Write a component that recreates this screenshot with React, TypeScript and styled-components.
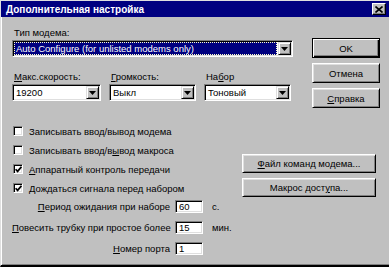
import styled, { createGlobalStyle } from "styled-components";

const GlobalStyle = createGlobalStyle`
  html, body {
    margin: 0;
    padding: 0;
    background: #c0c0c0;
  }
  body {
    font-family: "Liberation Sans", Arial, sans-serif;
    font-size: 9.5px;
    color: #000;
  }
`;

const Hot = ({ children }: { children: string }) => <Mnemonic>{children}</Mnemonic>;

const Arrow = () => (
  <svg width="7" height="4" viewBox="0 0 7 4">
    <path d="M0 0h7L3.5 4z" fill="#000" />
  </svg>
);

const CheckMark = () => (
  <svg width="7" height="7" viewBox="0 0 7 7">
    <path d="M0.6 3.2 L2.6 5.4 L6.4 0.8" fill="none" stroke="#000" strokeWidth="1.7" />
  </svg>
);

const CloseGlyph = () => (
  <svg width="8" height="7" viewBox="0 0 8 7">
    <path d="M0.5 0.5 L7.5 6.5 M7.5 0.5 L0.5 6.5" stroke="#000" strokeWidth="1.6" />
  </svg>
);

const Combo = ({ width, value, focused }: { width: number; value: string; focused?: boolean }) => (
  <ComboBox $width={width}>
    {focused ? <SelectedValue>{value}</SelectedValue> : <ComboValue>{value}</ComboValue>}
    <DropButton>
      <Arrow />
    </DropButton>
  </ComboBox>
);

const Check = ({ checked, children }: { checked?: boolean; children: React.ReactNode }) => (
  <CheckRow>
    <CheckBox>{checked && <CheckMark />}</CheckBox>
    <span>{children}</span>
  </CheckRow>
);

const App = (): JSX.Element => {
  return (
    <>
      <GlobalStyle />
      <Window>
        <TitleBar>
          <TitleText>Дополнительная настройка</TitleText>
          <CloseButton>
            <CloseGlyph />
          </CloseButton>
        </TitleBar>

        <Body>
          <TopSection>
            <LeftColumn>
              <FieldLabel>Тип модема:</FieldLabel>
              <Combo width={281} value="Auto Configure (for unlisted modems only)" focused />
              <SpeedRow>
                <SpeedField>
                  <FieldLabel>
                    <Hot>М</Hot>акс.скорость:
                  </FieldLabel>
                  <Combo width={89} value="19200" />
                </SpeedField>
                <SpeedField>
                  <FieldLabel>
                    <Hot>Г</Hot>ромкость:
                  </FieldLabel>
                  <Combo width={87} value="Выкл" />
                </SpeedField>
                <SpeedField>
                  <FieldLabel>
                    На<Hot>б</Hot>ор
                  </FieldLabel>
                  <Combo width={87} value="Тоновый" />
                </SpeedField>
              </SpeedRow>
            </LeftColumn>

            <ButtonColumn>
              <PushButton $default $width={68} $height={20}>
                OK
              </PushButton>
              <PushButton $width={68} $height={20}>
                Отмена
              </PushButton>
              <PushButton $width={68} $height={20}>
                <Hot>С</Hot>правка
              </PushButton>
            </ButtonColumn>
          </TopSection>

          <MiddleSection>
            <CheckList>
              <Check>Записывать ввод/вывод модема</Check>
              <Check>
                Записывать ввод/в<Hot>ы</Hot>вод макроса
              </Check>
              <Check checked>
                <Hot>А</Hot>ппаратный контроль передачи
              </Check>
              <Check checked>
                <Hot>Д</Hot>ождаться сигнала перед набором
              </Check>
            </CheckList>
            <SideButtons>
              <PushButton $width={134} $height={19}>
                <Hot>Ф</Hot>айл команд модема...
              </PushButton>
              <PushButton $width={134} $height={19}>
                Макрос дост<Hot>у</Hot>па...
              </PushButton>
            </SideButtons>
          </MiddleSection>

          <TimeoutGrid>
            <GridLabel>
              <Hot>П</Hot>ериод ожидания при наборе
            </GridLabel>
            <NumberField>60</NumberField>
            <Unit>с.</Unit>

            <GridLabel>
              <Hot>П</Hot>овесить трубку при простое более
            </GridLabel>
            <NumberField>15</NumberField>
            <Unit>мин.</Unit>

            <GridLabel>
              <Hot>Н</Hot>омер порта
            </GridLabel>
            <NumberField>1</NumberField>
            <Unit />
          </TimeoutGrid>
        </Body>
      </Window>
    </>
  );
};

export default App;

/* =================================================== */

const Mnemonic = styled.span`
  text-decoration: underline;
  text-underline-offset: 1px;
`;

const Window = styled.div`
  width: 389px;
  height: 267px;
  box-sizing: border-box;
  display: flex;
  flex-direction: column;
  background: #c0c0c0;
  border-top: 1px solid #dfdfdf;
  border-left: 1px solid #dfdfdf;
  border-bottom: 2px solid #000;
  box-shadow: inset 0 -1px #808080;
  overflow: hidden;
`;

const TitleBar = styled.div`
  height: 16px;
  flex: none;
  display: flex;
  align-items: center;
  justify-content: space-between;
  padding: 0 3px 0 5px;
  background: #000080;
`;

const TitleText = styled.span`
  color: #fff;
  font-weight: bold;
  font-size: 10px;
  white-space: nowrap;
`;

const CloseButton = styled.div`
  width: 14px;
  height: 12px;
  box-sizing: border-box;
  display: flex;
  align-items: center;
  justify-content: center;
  background: #c0c0c0;
  border: 1px solid;
  border-color: #fff #000 #000 #fff;
  box-shadow: inset -1px -1px #808080;
`;

const Body = styled.div`
  flex: 1;
  display: flex;
  flex-direction: column;
  padding: 10px 9px 0 10px;
  border-left: 1px solid #fff;
`;

const TopSection = styled.div`
  display: flex;
  gap: 19px;
`;

const LeftColumn = styled.div`
  display: flex;
  flex-direction: column;
`;

const FieldLabel = styled.div`
  height: 12px;
  line-height: 12px;
  margin: 0 0 1px 2px;
  white-space: nowrap;
`;

const ComboBox = styled.div<{ $width: number }>`
  width: ${(p) => p.$width}px;
  height: 17px;
  box-sizing: border-box;
  display: flex;
  align-items: stretch;
  padding: 1px;
  background: #fff;
  border: 1px solid;
  border-color: #808080 #fff #fff #808080;
  box-shadow: inset 1px 1px #000, inset -1px -1px #dfdfdf;
`;

const ComboValue = styled.div`
  flex: 1;
  display: flex;
  align-items: center;
  padding-left: 2px;
  white-space: nowrap;
  overflow: hidden;
`;

const SelectedValue = styled(ComboValue)`
  margin-right: 1px;
  background: #000080;
  color: #fff;
  outline: 1px dotted #ffffc8;
  outline-offset: -1px;
`;

const DropButton = styled.div`
  width: 13px;
  flex: none;
  box-sizing: border-box;
  display: flex;
  align-items: center;
  justify-content: center;
  background: #c0c0c0;
  border: 1px solid;
  border-color: #dfdfdf #000 #000 #dfdfdf;
  box-shadow: inset 1px 1px #fff, inset -1px -1px #808080;
`;

const SpeedRow = styled.div`
  display: flex;
  gap: 8px;
  margin-top: 14px;
`;

const SpeedField = styled.div`
  display: flex;
  flex-direction: column;
`;

const ButtonColumn = styled.div`
  display: flex;
  flex-direction: column;
  gap: 5px;
  margin-top: 11px;
`;

const PushButton = styled.div<{ $width: number; $height: number; $default?: boolean }>`
  width: ${(p) => p.$width}px;
  height: ${(p) => p.$height}px;
  box-sizing: border-box;
  display: flex;
  align-items: center;
  justify-content: center;
  white-space: nowrap;
  background: #c0c0c0;
  border: 1px solid;
  border-color: ${(p) => (p.$default ? "#000" : "#fff #000 #000 #fff")};
  box-shadow: ${(p) =>
    p.$default
      ? "inset 1px 1px #fff, inset -1px -1px #000, inset -2px -2px #808080"
      : "inset 1px 1px #dfdfdf, inset -1px -1px #808080"};
`;

const MiddleSection = styled.div`
  display: flex;
  justify-content: space-between;
  margin-top: 17px;
`;

const CheckList = styled.div`
  display: flex;
  flex-direction: column;
  gap: 7px;
`;

const CheckRow = styled.div`
  height: 12px;
  display: flex;
  align-items: center;
  gap: 6px;
  white-space: nowrap;
`;

const CheckBox = styled.div`
  width: 10px;
  height: 10px;
  box-sizing: border-box;
  margin-left: 1px;
  display: flex;
  align-items: center;
  justify-content: center;
  background: #fff;
  border: 1px solid;
  border-color: #808080 #fff #fff #808080;
  box-shadow: inset 1px 1px #000, inset -1px -1px #dfdfdf;
`;

const SideButtons = styled.div`
  display: flex;
  flex-direction: column;
  gap: 5px;
  margin: 29px 4px 0 0;
`;

const TimeoutGrid = styled.div`
  display: grid;
  grid-template-columns: 160px 28px auto;
  grid-auto-rows: 13px;
  column-gap: 3px;
  row-gap: 8px;
  align-items: center;
  margin-top: 3px;
`;

const GridLabel = styled.div`
  text-align: right;
  white-space: nowrap;
  margin-right: 2px;
`;

const NumberField = styled.div`
  height: 13px;
  box-sizing: border-box;
  display: flex;
  align-items: center;
  padding-left: 3px;
  background: #fff;
  border: 1px solid;
  border-color: #808080 #fff #fff #808080;
  box-shadow: inset 1px 1px #000, inset -1px -1px #dfdfdf;
`;

const Unit = styled.div`
  padding-left: 6px;
  white-space: nowrap;
`;
